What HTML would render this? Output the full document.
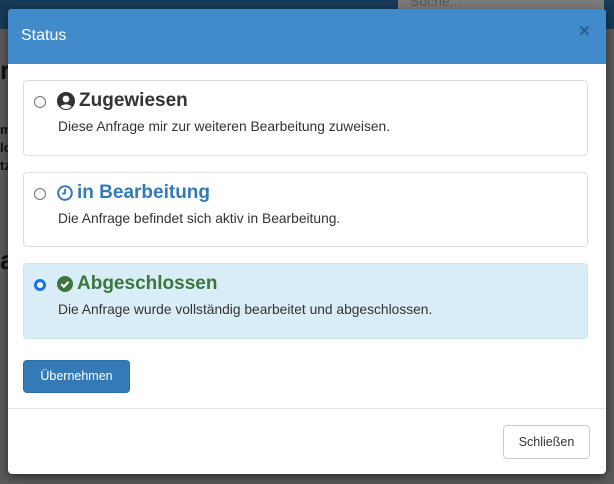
<!DOCTYPE html>
<html><head><style>
body{margin:0;width:614px;height:484px;overflow:hidden;background:#5a5a5a;font-family:"Liberation Sans",Arial,sans-serif;position:relative}
.top{position:absolute;left:0;top:0;width:614px;height:29px;background:#163a57}
.srch{position:absolute;left:398px;top:-6px;width:194px;height:22px;background:#7a7a7a;color:#555;font-size:14px;padding-left:12px;line-height:14px}
.bgtxt{position:absolute;left:0;font-weight:bold;color:#111;font-size:13px}
.modal{position:absolute;left:8px;top:9px;width:598px;height:465px;background:#fff;border-radius:4px;overflow:hidden;box-shadow:0 3px 9px rgba(0,0,0,.5)}
.hd{height:55px;background:#428bca;color:#fff;font-size:16px;line-height:53px;padding-left:13px;position:relative}
.x{position:absolute;right:16px;top:-4px;font-size:19px;color:#2a5f8f;font-weight:bold}
.p{position:absolute;left:15px;width:565px;border:1px solid #ddd;border-radius:4px;box-sizing:border-box}
.r{position:absolute;left:10px;top:15px;width:12px;height:12px;border:1px solid #777;border-radius:50%;box-sizing:border-box;background:#fff}
.t{position:absolute;left:33px;top:9px;font-size:19px;font-weight:bold;display:flex;align-items:center;gap:4px}
.d{position:absolute;left:34px;top:38px;font-size:13.8px;color:#333}
.btn{position:absolute;left:15px;top:351px;width:107px;height:33px;background:#337ab7;border:1px solid #2e6da4;border-radius:4px;box-sizing:border-box;color:#fff;font-size:12.5px;text-align:center;line-height:31px}
.ft{position:absolute;left:0;top:399px;width:598px;border-top:1px solid #e5e5e5}
.cl{position:absolute;left:495px;top:416px;width:87px;height:34px;border:1px solid #ccc;border-radius:4px;box-sizing:border-box;font-size:12.5px;color:#333;text-align:center;line-height:32px}
</style></head><body>
<div class="top"></div><div class="srch">Suche...</div>
<div class="bgtxt" style="top:55px;font-size:26px">rt</div>
<div class="bgtxt" style="top:122px">m</div><div class="bgtxt" style="top:140px">lo</div><div class="bgtxt" style="top:158px">tz</div>
<div class="bgtxt" style="top:245px;font-size:26px">a</div>
<div class="modal">
<div class="hd">Status<span class="x">×</span></div>
<div class="p" style="top:71px;height:76px"><div class="r"></div>
<div class="t" style="color:#333"><svg width="18" height="18" viewBox="0 0 16 16"><circle cx="8" cy="8" r="8" fill="#333"/><circle cx="8" cy="6.2" r="3" fill="#fff"/><path d="M3.2 13a5.5 4 0 0 1 9.6 0A6.5 6.5 0 0 1 3.2 13z" fill="#fff"/></svg>Zugewiesen</div>
<div class="d">Diese Anfrage mir zur weiteren Bearbeitung zuweisen.</div></div>
<div class="p" style="top:163px;height:75px"><div class="r"></div>
<div class="t" style="color:#337ab7"><svg width="16" height="16" viewBox="0 0 16 16"><circle cx="8" cy="8" r="6.8" fill="none" stroke="#337ab7" stroke-width="2"/><path d="M8 4v4.5H5" fill="none" stroke="#337ab7" stroke-width="1.8"/></svg> in Bearbeitung</div>
<div class="d">Die Anfrage befindet sich aktiv in Bearbeitung.</div></div>
<div class="p" style="top:254px;height:76px;background:#d9edf7;border-color:#cfe4ee"><div class="r" style="border:3px solid #1a73e8;width:12px;height:12px"></div>
<div class="t" style="color:#3c763d"><svg width="16" height="16" viewBox="0 0 16 16"><circle cx="8" cy="8" r="8" fill="#3c763d"/><path d="M4.3 8.2l2.5 2.5 4.8-4.8" fill="none" stroke="#fff" stroke-width="2.2"/></svg>Abgeschlossen</div>
<div class="d">Die Anfrage wurde vollständig bearbeitet und abgeschlossen.</div></div>
<div class="btn">Übernehmen</div>
<div class="ft"></div>
<div class="cl">Schließen</div>
</div>
</body></html>
